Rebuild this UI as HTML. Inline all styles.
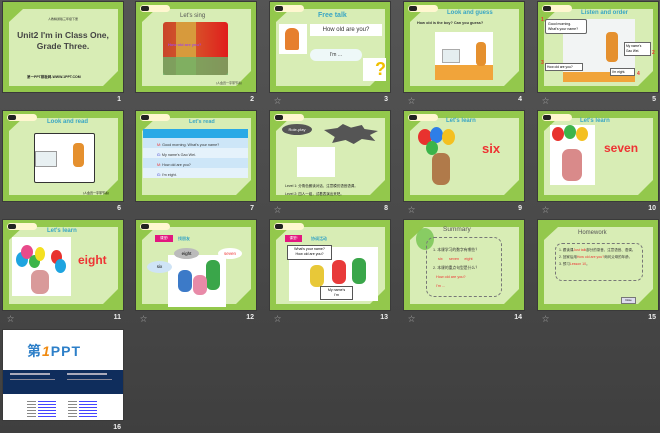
<!DOCTYPE html>
<html><head><meta charset="utf-8"><style>
*{margin:0;padding:0;box-sizing:border-box}
body{width:660px;height:433px;overflow:hidden;background:linear-gradient(#555 0%,#4a4a4a 50%,#3f3f3f 100%);font-family:"Liberation Sans","Noto Sans CJK SC",sans-serif;position:relative}
.s{position:absolute;width:120px;height:90px;background:#93c84c;overflow:hidden;box-shadow:0 0 0 1px #3a3a3a}
.p{position:absolute;left:6px;top:7px;width:109px;height:77px;background:#d8edb5;clip-path:polygon(14px 0,100% 0,100% 62px,94px 100%,0 100%,0 13px)}
.n{position:absolute;color:#eee;font-size:7px;font-weight:bold;width:20px;text-align:right}
.st{position:absolute;color:#aaa;font-size:7px}
.a{position:absolute}
.t{position:absolute;color:#3aa6c4;font-weight:bold;font-size:7px;white-space:nowrap}
.tag{position:absolute;left:4px;top:3px;width:30px;height:7px;background:#fff7d0;border-radius:4px}
.tag:before{content:"";position:absolute;left:1px;top:1px;width:8px;height:5px;background:#222;border-radius:2px}
.w{background:#fff}
.r{color:#e33}
</style></head><body>

<!-- row 1 -->
<div class="s" style="left:3px;top:2px"><div class="p"></div>
<div class="a" style="left:0;top:15px;width:120px;text-align:center;font-size:3px;color:#333">人教精通版三年级下册</div>
<div class="a" style="left:0;top:28px;width:120px;text-align:center;font-size:8.5px;font-weight:bold;color:#444;line-height:11px">Unit2 I'm in Class One,<br>Grade Three.</div>
<div class="a" style="left:24px;top:73px;font-size:3.5px;color:#222;font-weight:bold">第一PPT模板网-WWW.1PPT.COM</div></div>
<div class="n" style="left:101px;top:96px">1</div>

<div class="s" style="left:136px;top:2px"><div class="p"></div><div class="tag"></div>
<div class="a" style="left:44px;top:11px;font-size:6px;color:#555">Let's sing</div>
<div class="a" style="left:27px;top:20px;width:65px;height:53px;border-radius:3px;background:linear-gradient(90deg,#c9452a 0%,#d65a2a 40%,#e01d1d 100%)"></div>
<div class="a" style="left:40px;top:20px;width:20px;height:53px;background:#d79a3c"></div>
<div class="a" style="left:27px;top:55px;width:65px;height:18px;background:#6ab46a;opacity:.8"></div>
<div class="a" style="left:32px;top:40px;font-size:4px;font-weight:bold;color:#a54ad8">How old are you?</div>
<div class="a" style="left:80px;top:79px;font-size:3px;color:#333">(人会员一字带节奏)</div></div>
<div class="n" style="left:234px;top:96px">2</div>

<div class="s" style="left:270px;top:2px"><div class="p"></div><div class="tag"></div>
<div class="t" style="left:48px;top:10px">Free talk</div>
<div class="a w" style="left:9px;top:22px;width:28px;height:30px"></div>
<div class="a" style="left:15px;top:26px;width:14px;height:22px;background:#e67f2e;border-radius:6px 6px 2px 2px"></div>
<div class="a w" style="left:40px;top:22px;width:72px;height:12px;font-size:6px;text-align:center;line-height:12px;color:#333">How old are you?</div>
<div class="a w" style="left:40px;top:47px;width:52px;height:12px;border-radius:7px;background:#eef8f8;font-size:5px;text-align:center;line-height:12px;color:#333">I'm ...</div>
<div class="a w" style="left:93px;top:56px;width:23px;height:23px;color:#f0c000;font-size:18px;font-weight:bold;text-align:right;line-height:22px">?</div></div>
<div class="n" style="left:368px;top:96px">3</div><div class="st" style="left:274px;top:96px">☆</div>

<div class="s" style="left:404px;top:2px"><div class="p"></div><div class="tag"></div>
<div class="t" style="left:43px;top:8px;font-size:6px">Look and guess</div>
<div class="a" style="left:13px;top:19px;font-size:3.8px;font-weight:bold;color:#333">How old is the boy? Can you guess?</div>
<div class="a w" style="left:31px;top:30px;width:58px;height:48px"></div>
<div class="a" style="left:31px;top:63px;width:58px;height:15px;background:#f1a43a"></div>
<div class="a" style="left:38px;top:47px;width:18px;height:14px;background:#e5eef0;border:1px solid #aaa"></div>
<div class="a" style="left:72px;top:40px;width:10px;height:24px;background:#e5902e;border-radius:4px"></div></div>
<div class="n" style="left:502px;top:96px">4</div><div class="st" style="left:408px;top:96px">☆</div>

<div class="s" style="left:538px;top:2px"><div class="p"></div><div class="tag"></div>
<div class="t" style="left:43px;top:8px;font-size:6px">Listen and order</div>
<div class="a w" style="left:25px;top:17px;width:72px;height:63px;background:#f2f4f4"></div>
<div class="a" style="left:25px;top:70px;width:72px;height:10px;background:#f1a43a"></div>
<div class="a" style="left:68px;top:30px;width:12px;height:30px;background:#e5902e;border-radius:4px"></div>
<div class="a w" style="left:7px;top:17px;width:42px;height:15px;border:1px solid #666;border-radius:2px;font-size:3.5px;line-height:5px;padding:2px">Good morning.<br>What's your name?</div>
<div class="a w" style="left:86px;top:40px;width:27px;height:14px;border:1px solid #666;font-size:3.2px;line-height:5px;padding:1px">My name's<br>Gao Wei.</div>
<div class="a w" style="left:7px;top:61px;width:38px;height:8px;border:1px solid #666;font-size:3.3px;padding:1px">How old are you?</div>
<div class="a w" style="left:72px;top:66px;width:25px;height:8px;border:1px solid #666;font-size:3.3px;padding:1px">I'm eight.</div>
<div class="a r" style="left:3px;top:15px;font-size:5px;font-weight:bold">1</div>
<div class="a r" style="left:114px;top:48px;font-size:5px;font-weight:bold">2</div>
<div class="a r" style="left:3px;top:58px;font-size:5px;font-weight:bold">3</div>
<div class="a r" style="left:99px;top:69px;font-size:5px;font-weight:bold">4</div></div>
<div class="n" style="left:636px;top:96px">5</div><div class="st" style="left:542px;top:96px">☆</div>

<!-- row 2 -->
<div class="s" style="left:3px;top:111px"><div class="p"></div><div class="tag"></div>
<div class="t" style="left:44px;top:8px;font-size:6px">Look and read</div>
<div class="a w" style="left:31px;top:22px;width:61px;height:50px;border:1px solid #333;border-radius:2px"></div>
<div class="a" style="left:32px;top:40px;width:22px;height:16px;background:#e8f0f2;border:1px solid #999"></div>
<div class="a" style="left:70px;top:32px;width:11px;height:24px;background:#e5902e;border-radius:4px"></div>
<div class="a" style="left:80px;top:80px;font-size:3px">(人会员一字带节奏)</div></div>
<div class="n" style="left:101px;top:205px">6</div>

<div class="s" style="left:136px;top:111px"><div class="p"></div><div class="tag"></div>
<div class="t" style="left:53px;top:8px;font-size:5.5px">Let's read</div>
<div class="a" style="left:7px;top:18px;width:105px;height:9px;background:#29a9e6"></div>
<div class="a" style="left:7px;top:27px;width:105px;height:10px;background:#cde6f8"></div>
<div class="a" style="left:7px;top:37px;width:105px;height:10px;background:#e5f2fb"></div>
<div class="a" style="left:7px;top:47px;width:105px;height:10px;background:#cde6f8"></div>
<div class="a" style="left:7px;top:57px;width:105px;height:10px;background:#e5f2fb"></div>
<div class="a" style="left:21px;top:29px;font-size:3.7px;line-height:10px;color:#333;white-space:nowrap"><span class="r">M:</span> Good morning. What's your name?<br><span style="color:#33c">G:</span> My name's Gao Wei.<br><span class="r">M:</span> How old are you?<br><span style="color:#33c">G:</span> I'm eight.</div></div>
<div class="n" style="left:234px;top:205px">7</div>

<div class="s" style="left:270px;top:111px"><div class="p"></div><div class="tag"></div>
<div class="a" style="left:12px;top:13px;width:30px;height:11px;border-radius:50%;background:#555;color:#fff;font-size:4px;text-align:center;line-height:11px">Role-play</div>
<div class="a" style="left:54px;top:13px;width:54px;height:20px;background:#555;clip-path:polygon(0 30%,25% 20%,35% 0,50% 18%,70% 5%,75% 25%,100% 35%,85% 55%,95% 85%,70% 75%,55% 100%,40% 80%,15% 95%,20% 65%)"></div>
<div class="a w" style="left:27px;top:36px;width:38px;height:30px"></div>
<div class="a" style="left:15px;top:71px;font-size:3.5px;line-height:8px;color:#222">Level 1: 分角色朗读对话，注意模仿语音语调。<br>Level 2: 四人一组，试着表演出来吧。</div></div>
<div class="n" style="left:368px;top:205px">8</div><div class="st" style="left:274px;top:205px">☆</div>

<div class="s" style="left:404px;top:111px"><div class="p"></div><div class="tag"></div>
<div class="t" style="left:42px;top:7px;font-size:6px">Let's learn</div>
<div class="a" style="left:14px;top:18px;width:14px;height:16px;border-radius:50%;background:#e8322e"></div>
<div class="a" style="left:26px;top:16px;width:13px;height:16px;border-radius:50%;background:#2e7ee8"></div>
<div class="a" style="left:38px;top:18px;width:13px;height:16px;border-radius:50%;background:#f4c020"></div>
<div class="a" style="left:22px;top:30px;width:12px;height:14px;border-radius:50%;background:#3cb44a"></div>
<div class="a" style="left:28px;top:42px;width:18px;height:32px;border-radius:7px;background:#b07a4a"></div>
<div class="a r" style="left:78px;top:30px;font-size:13px;font-weight:bold">six</div></div>
<div class="n" style="left:502px;top:205px">9</div><div class="st" style="left:408px;top:205px">☆</div>

<div class="s" style="left:538px;top:111px"><div class="p"></div><div class="tag"></div>
<div class="t" style="left:42px;top:7px;font-size:6px">Let's learn</div>
<div class="a w" style="left:12px;top:14px;width:45px;height:60px"></div>
<div class="a" style="left:14px;top:16px;width:12px;height:14px;border-radius:50%;background:#e8322e"></div>
<div class="a" style="left:26px;top:14px;width:12px;height:14px;border-radius:50%;background:#3cb44a"></div>
<div class="a" style="left:38px;top:16px;width:12px;height:14px;border-radius:50%;background:#f4c020"></div>
<div class="a" style="left:24px;top:38px;width:20px;height:32px;border-radius:7px;background:#d98a8a"></div>
<div class="a r" style="left:66px;top:30px;font-size:12px;font-weight:bold">seven</div></div>
<div class="n" style="left:636px;top:205px">10</div><div class="st" style="left:542px;top:205px">☆</div>

<!-- row 3 -->
<div class="s" style="left:3px;top:220px"><div class="p"></div><div class="tag"></div>
<div class="t" style="left:44px;top:8px;font-size:6px">Let's learn</div>
<div class="a w" style="left:9px;top:17px;width:59px;height:59px"></div>
<div class="a" style="left:13px;top:32px;width:12px;height:15px;border-radius:50%;background:#1ea4e0"></div>
<div class="a" style="left:18px;top:25px;width:12px;height:14px;border-radius:50%;background:#e84a8a"></div>
<div class="a" style="left:26px;top:35px;width:11px;height:13px;border-radius:50%;background:#3cb44a"></div>
<div class="a" style="left:32px;top:27px;width:10px;height:14px;border-radius:50%;background:#f4e020"></div>
<div class="a" style="left:48px;top:30px;width:11px;height:14px;border-radius:50%;background:#e8322e"></div>
<div class="a" style="left:52px;top:39px;width:11px;height:14px;border-radius:50%;background:#1ea4e0"></div>
<div class="a" style="left:28px;top:50px;width:18px;height:24px;border-radius:7px;background:#d99a9a"></div>
<div class="a r" style="left:75px;top:33px;font-size:12px;font-weight:bold">eight</div></div>
<div class="n" style="left:101px;top:314px">11</div><div class="st" style="left:7px;top:314px">☆</div>

<div class="s" style="left:136px;top:220px"><div class="p"></div><div class="tag"></div>
<div class="a" style="left:19px;top:15px;width:18px;height:7px;background:#e2177f;color:#fff;font-size:3.5px;text-align:center;line-height:7px">课堂!</div>
<div class="a" style="left:42px;top:16px;font-size:4px;color:#3aa6c4;font-weight:bold">找朋友</div>
<div class="a w" style="left:32px;top:35px;width:58px;height:52px"></div>
<div class="a" style="left:42px;top:50px;width:14px;height:22px;border-radius:6px;background:#3c7ac8"></div>
<div class="a" style="left:70px;top:40px;width:14px;height:30px;border-radius:6px;background:#3aa64a"></div>
<div class="a" style="left:57px;top:55px;width:14px;height:20px;border-radius:6px;background:#e88aa8"></div>
<div class="a" style="left:11px;top:41px;width:25px;height:12px;border-radius:50%;background:#cfe4f6;font-size:4.5px;text-align:center;line-height:12px">six</div>
<div class="a" style="left:38px;top:28px;width:25px;height:11px;border-radius:50%;background:#bbb;font-size:4.5px;text-align:center;line-height:11px">eight</div>
<div class="a w" style="left:82px;top:28px;width:24px;height:11px;border-radius:50%;font-size:4.5px;text-align:center;line-height:11px;color:#e33">seven</div></div>
<div class="n" style="left:234px;top:314px">12</div><div class="st" style="left:140px;top:314px">☆</div>

<div class="s" style="left:270px;top:220px"><div class="p"></div><div class="tag"></div>
<div class="a" style="left:15px;top:15px;width:17px;height:7px;background:#e2177f;color:#fff;font-size:3.5px;text-align:center;line-height:7px">课堂!</div>
<div class="a" style="left:41px;top:16px;font-size:4px;color:#3aa6c4;font-weight:bold">协调活动</div>
<div class="a w" style="left:19px;top:27px;width:89px;height:54px"></div>
<div class="a" style="left:40px;top:45px;width:14px;height:22px;border-radius:6px;background:#e8c838"></div>
<div class="a" style="left:62px;top:40px;width:14px;height:24px;border-radius:6px;background:#e83a3a"></div>
<div class="a" style="left:82px;top:38px;width:14px;height:26px;border-radius:6px;background:#3aa64a"></div>
<div class="a w" style="left:17px;top:25px;width:45px;height:15px;border:1px solid #555;font-size:3.6px;line-height:5px;text-align:center;padding-top:1px">What's your name?<br>How old are you?</div>
<div class="a w" style="left:50px;top:66px;width:33px;height:14px;border:1px solid #555;font-size:3.6px;line-height:5px;text-align:center;padding-top:1px">My name's<br>I'm</div></div>
<div class="n" style="left:368px;top:314px">13</div><div class="st" style="left:274px;top:314px">☆</div>

<div class="s" style="left:404px;top:220px"><div class="p"></div>
<div class="a" style="left:12px;top:8px;width:18px;height:22px;border-radius:50%;background:#7fc85a;opacity:.9"></div>
<div class="a" style="left:39px;top:6px;font-size:6.5px;color:#555">Summary</div>
<div class="a" style="left:22px;top:17px;width:76px;height:60px;border:1px dashed #777;border-radius:8px"></div>
<div class="a" style="left:29px;top:26px;font-size:3.8px;line-height:9px;color:#333;white-space:nowrap">1. 本课学习的数字有哪些？<br><span class="r" style="padding-left:5px">six &nbsp;&nbsp;&nbsp;&nbsp; seven &nbsp;&nbsp;&nbsp; eight</span><br>2. 本课的重点句型是什么？<br><span class="r" style="padding-left:3px">How old are you?</span><br><span class="r" style="padding-left:3px">I'm ...</span></div></div>
<div class="n" style="left:502px;top:314px">14</div><div class="st" style="left:408px;top:314px">☆</div>

<div class="s" style="left:538px;top:220px"><div class="p"></div>
<div class="a" style="left:40px;top:10px;font-size:6px;color:#555">Homework</div>
<div class="a" style="left:17px;top:23px;width:88px;height:38px;border:1px dashed #777;border-radius:7px"></div>
<div class="a" style="left:21px;top:27px;font-size:3.5px;line-height:7px;color:#333;width:82px">1. 跟读课<span class="r">Just talk</span>部分的录音，注意语音、语调。<br>2. 回家后用<span class="r">How old are you?</span>询问父母的年龄。<br>3. 预习<span class="r">Lesson 10</span>。</div>
<div class="a" style="left:83px;top:77px;width:15px;height:7px;background:#dde;border:1px solid #777;font-size:2.5px;text-align:center;line-height:6px">Close</div></div>
<div class="n" style="left:636px;top:314px">15</div><div class="st" style="left:542px;top:314px">☆</div>

<!-- row 4 -->
<div class="s" style="left:3px;top:330px;background:#fff"><div class="a" style="left:24px;top:11px;font-size:14px;font-weight:bold;color:#2d7fc8;letter-spacing:1px">第<span style="color:#f08a10;font-style:italic">1</span>PPT</div>
<div class="a" style="left:0;top:40px;width:120px;height:24px;background:#0f2d5c"></div>
<div class="a" style="left:7px;top:43px;width:40px;height:2px;background:#aab"></div>
<div class="a" style="left:64px;top:43px;width:40px;height:2px;background:#aab"></div>
<div class="a" style="left:7px;top:49px;width:45px;height:1px;background:#889"></div>
<div class="a" style="left:64px;top:49px;width:45px;height:1px;background:#889"></div>
<div class="a" style="left:35px;top:71px;width:18px;height:16px;background:repeating-linear-gradient(#44f 0 1px,transparent 1px 3px)"></div>
<div class="a" style="left:76px;top:71px;width:18px;height:16px;background:repeating-linear-gradient(#44f 0 1px,transparent 1px 3px)"></div>
<div class="a" style="left:24px;top:71px;width:9px;height:16px;background:repeating-linear-gradient(#888 0 1px,transparent 1px 3px)"></div>
<div class="a" style="left:65px;top:71px;width:9px;height:16px;background:repeating-linear-gradient(#888 0 1px,transparent 1px 3px)"></div></div>
<div class="n" style="left:101px;top:424px">16</div>

</body></html>
